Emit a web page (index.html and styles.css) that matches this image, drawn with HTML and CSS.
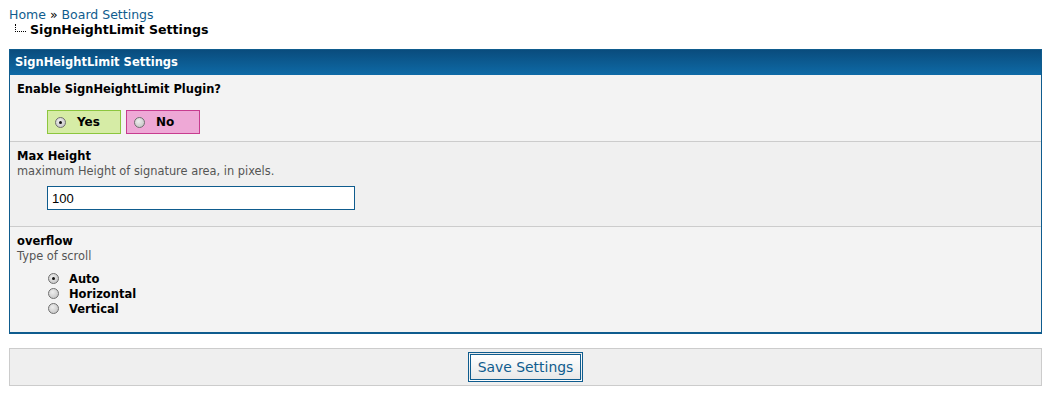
FILE: index.html
```html
<!DOCTYPE html>
<html lang="en">
<head>
    <meta charset="UTF-8">
    <title>SignHeightLimit Settings</title>
    <link rel="stylesheet" href="styles.css">
</head>
<body>
    <div class="breadcrumb">
        <a href="#">Home</a> &raquo; <a href="#">Board Settings</a>
        <div class="current"><span class="tree"></span>SignHeightLimit Settings</div>
    </div>

    <form>
        <div class="panel">
            <div class="panel-head">SignHeightLimit Settings</div>

            <div class="row">
                <div class="title">Enable SignHeightLimit Plugin?</div>
                <div class="yesno">
                    <label class="choice yes"><input type="radio" name="enabled" checked> Yes</label>
                    <label class="choice no"><input type="radio" name="enabled"> No</label>
                </div>
            </div>

            <div class="row alt">
                <div class="title">Max Height</div>
                <div class="desc">maximum Height of signature area, in pixels.</div>
                <input type="text" class="textbox" value="100">
            </div>

            <div class="row last">
                <div class="title">overflow</div>
                <div class="desc">Type of scroll</div>
                <div class="radios">
                    <label><input type="radio" name="overflow" checked> Auto</label>
                    <label><input type="radio" name="overflow"> Horizontal</label>
                    <label><input type="radio" name="overflow"> Vertical</label>
                </div>
            </div>
        </div>

        <div class="buttons">
            <button type="button">Save Settings</button>
        </div>
    </form>
</body>
</html>
```

FILE: styles.css
```css
body {
    margin: 0;
    padding: 8px 8px 0 9px;
    font-family: "DejaVu Sans", Verdana, sans-serif;
    font-size: 11.5px;
    color: #000;
    background-color: #fff;
}

a {
    color: #0f5c8e;
    text-decoration: none;
}

.breadcrumb {
    font-size: 12.5px;
    line-height: 14px;
    margin-bottom: 11px;
}

.breadcrumb .current {
    font-weight: bold;
    font-size: 12.6px;
    line-height: 16px;
    display: flex;
    align-items: center;
}

.tree {
    display: inline-block;
    width: 10px;
    height: 7px;
    margin: 0 4px 5px 6px;
    border-left: 1px dotted #000;
    border-bottom: 1px dotted #000;
}

.panel {
    width: 1031px;
    border: 1px solid #0f5c8e;
    border-bottom-width: 2px;
    background-color: #f3f3f3;
}

.panel-head {
    height: 25px;
    line-height: 25px;
    padding-left: 5px;
    color: #fff;
    font-weight: bold;
    font-size: 11.5px;
    background: linear-gradient(#0a4c7d, #0e6aa6);
}

.row {
    padding: 7px 7px 7px 7px;
    border-bottom: 1px solid #cccccc;
}

.row.alt {
    background-color: #f0f0f0;
    padding-bottom: 16px;
}

.row.last {
    border-bottom: none;
    padding-bottom: 16px;
}

.title {
    font-weight: bold;
    line-height: 15px;
}

.desc {
    font-size: 11.4px;
    color: #555;
    line-height: 14px;
}

.yesno {
    display: flex;
    gap: 5px;
    margin: 13px 0 0 30px;
}

.choice {
    display: flex;
    align-items: center;
    width: 74px;
    height: 24px;
    padding-left: 7px;
    box-sizing: border-box;
    font-weight: bold;
    font-size: 12px;
}

.choice input[type="radio"] {
    margin-right: 11px;
}

.choice.yes {
    background-color: #d6eca6;
    border: 1px solid #8cc63e;
}

.choice.no {
    background-color: #eea8d6;
    border: 1px solid #c73c8f;
}

input[type="radio"] {
    -webkit-appearance: none;
    appearance: none;
    width: 11px;
    height: 11px;
    margin: 0 10px 0 0;
    border: 1px solid #6f6f6f;
    border-radius: 50%;
    background: radial-gradient(circle at 40% 35%, #eeeeee, #bdbdbd);
    box-sizing: border-box;
    position: relative;
}

input[type="radio"]:checked::after {
    content: "";
    position: absolute;
    left: 3px;
    top: 3px;
    width: 3px;
    height: 3px;
    border-radius: 50%;
    background-color: #111;
}

.textbox {
    display: block;
    width: 308px;
    height: 24px;
    margin: 8px 0 0 30px;
    padding: 0 4px;
    box-sizing: border-box;
    border: 1px solid #0f5c8e;
    background-color: #fff;
    font-family: "Liberation Sans", Arial, sans-serif;
    font-size: 13px;
}

.radios {
    margin: 8px 0 0 31px;
}

.radios label {
    display: flex;
    align-items: center;
    font-weight: bold;
    height: 15px;
}

.buttons {
    width: 1031px;
    margin-top: 14px;
    padding: 3px 0 3px 0;
    text-align: center;
    background-color: #efefef;
    border: 1px solid #cccccc;
}

button {
    font-family: "DejaVu Sans", Verdana, sans-serif;
    font-size: 13.9px;
    color: #0f5c8e;
    height: 30px;
    padding: 0 7px;
    background: linear-gradient(#fff, #e8e8e8);
    border: 3px double #0f5c8e;
    cursor: pointer;
}
```
